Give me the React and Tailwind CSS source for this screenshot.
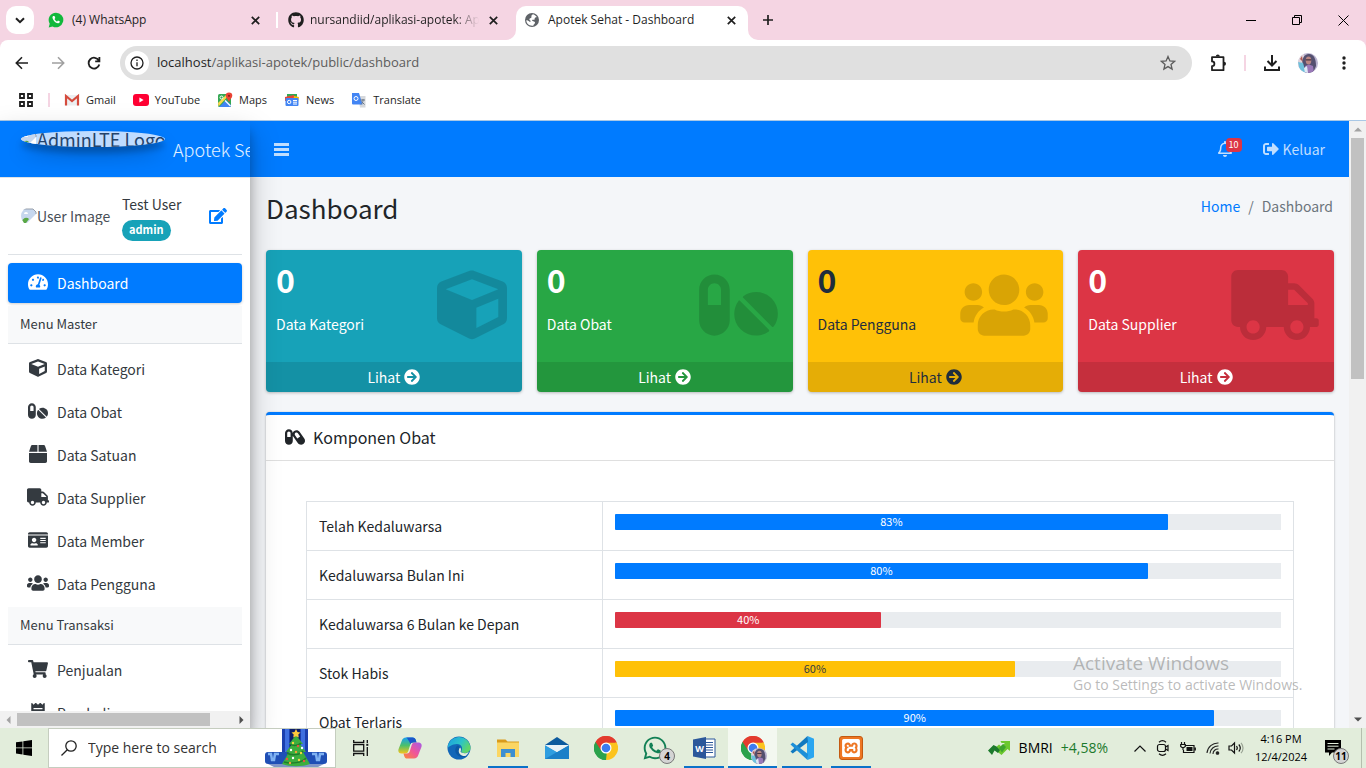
import React from "react";
import {
  FaTachometerAlt, FaCube, FaPills, FaBox, FaTruck, FaIdCard, FaUsers, FaShoppingCart, FaReceipt,
  FaCapsules, FaArrowCircleRight, FaSignOutAlt, FaRegBell, FaEdit, FaGithub, FaWhatsapp,
} from "react-icons/fa";
import { SiXampp } from "react-icons/si";

/* ---------- Browser icons ---------- */

const stroke = { fill: "none", stroke: "currentColor" };

function CloseX({ size = 9 }) {
  return (
    <svg width={size} height={size} viewBox="0 0 9 9" {...stroke} strokeWidth="1.7">
      <path d="M.8.8l7.4 7.4M8.2.8L.8 8.2" />
    </svg>
  );
}

function WhatsAppDot() {
  return (
    <svg className="h-4 w-4 shrink-0" viewBox="0 0 16 16">
      <path d="M8 .7a7.3 7.3 0 0 0-6.3 11L.7 15.4l3.8-1A7.3 7.3 0 1 0 8 .7z" fill="#12b83c" />
      <path d="M5.1 4c-.9.7-.9 2 .3 3.900 1.500 2.300 3.400 3.500 5 3.300.9-.1 1.500-.8 1.500-1.600L10 8.500l-.9 1C8 9 7 8 6.500 6.900l.8-.9L6.500 4z" fill="#fff" />
    </svg>
  );
}

function Globe() {
  return (
    <svg className="h-4 w-4 shrink-0" viewBox="0 0 16 16">
      <circle cx="8" cy="8" r="7" fill="#5f6368" />
      <path d="M8.800 2.300c1.500.3 3 1.200 4 2.700-.8.500-1.600.3-2 .9-.4.700.3 1.200-.3 1.700-.7.500-1.800-.1-2.300.5-.4.500.2 1.100 1 1.200 1 .1 1.800.500 1.800 1.400 0 1.300-1.600 1.500-1.700 3C5 14.300 2.300 11.600 2.300 8.300c1.100-.1 2.200.500 3 1.300.7.600 1.500.2 1.300-.6-.2-.9-1.300-.8-1.300-1.800 0-1.100 1.700-.9 2.100-1.800.4-.8-.4-1.200.1-1.900.3-.5.8-.6 1.300-1.200z" fill="#fff" />
    </svg>
  );
}

function GmailIcon() {
  return (
    <svg className="h-4 w-4" viewBox="0 0 16 16">
      <path d="M1 3h14v10.500H1z" fill="#eceff1" />
      <path d="M2 13.500V4l6 5 6-5v9.500" fill="none" stroke="#d54b3d" strokeWidth="2.200" />
    </svg>
  );
}

function YouTubeIcon() {
  return (
    <svg className="h-4 w-4" viewBox="0 0 16 16">
      <rect y="2" width="16" height="12" rx="3" fill="#ff0033" />
      <path d="M6.400 5.500v5L10.600 8z" fill="#fff" />
    </svg>
  );
}

function MapsIcon() {
  return (
    <svg className="h-4 w-4" viewBox="0 0 16 16">
      <rect x="1" y="2" width="13" height="13" rx="1.500" fill="#34a853" />
      <path d="M2 15L9 8l5 5v.500a1.500 1.500 0 0 1-1.500 1.500z" fill="#4285f4" />
      <path d="M1 11l9-9h3L1.500 14.500z" fill="#fbd74a" />
      <path d="M8 8.500l5.500 5.500" stroke="#fff" strokeWidth="1.200" />
      <circle cx="4.500" cy="5.500" r="1.500" fill="none" stroke="#fff" />
      <path d="M12 .5a3.300 3.300 0 0 0-3.300 3.300C8.700 6 11 7 12 10c1-3 3.300-4 3.300-6.200A3.300 3.300 0 0 0 12 .5z" fill="#ea4335" />
      <circle cx="12" cy="3.800" r="1.100" fill="#8c231b" />
    </svg>
  );
}

function NewsIcon() {
  return (
    <svg className="h-4 w-4" viewBox="0 0 16 16">
      <rect x="3" y="2" width="10" height="7" fill="#34a853" />
      <path d="M1 5l9-2 1 6H1z" fill="#ea4335" />
      <path d="M10 4l5 1-1 5H9z" fill="#fbbc04" />
      <rect x="1.500" y="6" width="13" height="8" rx="1" fill="#4285f4" />
      <circle cx="5.200" cy="10" r="1.700" fill="none" stroke="#fff" />
      <path d="M9 8.500h4M9 10.200h4M9 12h4" stroke="#fff" />
    </svg>
  );
}

function TranslateIcon() {
  return (
    <svg className="h-4 w-4" viewBox="0 0 16 16">
      <path d="M7 4h7.500v11.500H9z" fill="#d5d8dc" />
      <path d="M1 1h7l3.500 11.500H2a1 1 0 0 1-1-1z" fill="#4285f4" />
      <circle cx="5" cy="6.500" r="2" fill="none" stroke="#fff" />
      <path d="M9.500 8h4.500M12 7v1c0 2-1 3.500-2 4.500M10.500 9.500l3 3" stroke="#6b7785" fill="none" />
    </svg>
  );
}

function Avatar({ className }) {
  return (
    <svg className={className} viewBox="0 0 20 20">
      <defs>
        <clipPath id="face"><circle cx="10" cy="10" r="10" /></clipPath>
      </defs>
      <g clipPath="url(#face)">
        <path d="M0 0h20v20H0z" fill="#b9b3cf" />
        <path d="M0 0h6v20H0z" fill="#e0d3da" />
        <path d="M2 6l2-3 1 6z" fill="#b0574f" />
        <path d="M5 14C3 6 6 1 11 1s7 5 7 12l-3 7H7z" fill="#54506f" />
        <path d="M0 9l5 1 3 10H2z" fill="#6fc0dc" />
        <ellipse cx="10.500" cy="7.500" rx="2.800" ry="4" fill="#b98683" />
        <path d="M7.700 6.300h5.600v1.200H7.700z" fill="#4a3542" />
        <path d="M7 13l4-1.500 4 1.500 1 7H7z" fill="#9a79b8" />
        <path d="M6 15l3-2 1 7H7z" fill="#dfe9f5" />
      </g>
    </svg>
  );
}

function ChromeLogo({ className }) {
  return (
    <svg className={className} viewBox="0 0 24 24">
      <path d="M12 12L1.600 6A12 12 0 0 1 22.400 6z" fill="#e33b2e" />
      <path d="M12 12L22.400 6A12 12 0 0 1 12 24z" fill="#fcc31e" />
      <path d="M12 12v12A12 12 0 0 1 1.600 6z" fill="#2ba24c" />
      <path d="M12 6.500h10.700L17 15l-5 9 1-9z" fill="#fcc31e" />
      <path d="M1.600 6l5.600 9 5.500 2.500L12 24A12 12 0 0 1 1.600 6z" fill="#2ba24c" />
      <path d="M12 6.500h10.700A12 12 0 0 0 1.600 6l5.600 8.500z" fill="#e33b2e" />
      <circle cx="12" cy="12" r="5.500" fill="#fff" />
      <circle cx="12" cy="12" r="4.300" fill="#3c7cf0" />
    </svg>
  );
}

/* ---------- Browser chrome ---------- */

function TabStrip() {
  return (
    <header className="flex h-10 shrink-0 items-stretch bg-[#f5d5e3] text-xs text-[#1f1f1f]">
      <button aria-label="Search tabs" className="ml-1.5 mt-1.5 flex size-7 items-center justify-center rounded-[10px] bg-white">
        <svg width="10" height="7" viewBox="0 0 10 7" {...stroke} strokeWidth="2"><path d="M1 1.200l4 4 4-4" /></svg>
      </button>
      <div className="ml-3.5 flex w-[228px] items-center">
        <WhatsAppDot />
        <span className="ml-2 flex-1">(4) WhatsApp</span>
        <button aria-label="Close tab" className="mr-4"><CloseX /></button>
      </div>
      <div className="flex w-[240px] items-center">
        <span className="mr-2.5 h-4 w-0.5 bg-white" />
        <FaGithub className="size-4 shrink-0" />
        <span className="ml-1.5 flex-1 overflow-hidden whitespace-nowrap [mask-image:linear-gradient(to_right,black_85%,transparent)]">nursandiid/aplikasi-apotek: Aplikasi</span>
        <button aria-label="Close tab" className="ml-2.5 mr-[18px]"><CloseX /></button>
      </div>
      <div className="mt-1.5 flex items-end">
        <svg width="10" height="10" className="-ml-2.5" viewBox="0 0 10 10"><path d="M10 0v10H0A10 10 0 0 0 10 0z" fill="#fff" /></svg>
        <div className="flex h-full w-[232px] items-center rounded-t-[10px] bg-white pb-1.5 pl-2">
          <Globe />
          <span className="ml-2 flex-1">Apotek Sehat - Dashboard</span>
          <button aria-label="Close tab" className="mr-3"><CloseX /></button>
        </div>
        <svg width="10" height="10" viewBox="0 0 10 10"><path d="M0 0v10h10A10 10 0 0 1 0 0z" fill="#fff" /></svg>
      </div>
      <button aria-label="New tab" className="px-1">
        <svg width="12" height="12" viewBox="0 0 12 12" {...stroke} strokeWidth="1.700"><path d="M6 1v10M1 6h10" /></svg>
      </button>
      <div className="ml-auto flex text-black">
        <button aria-label="Minimize" className="flex w-[46px] items-center justify-center">
          <svg width="10" height="10" viewBox="0 0 10 10" {...stroke}><path d="M0 5.500h10" /></svg>
        </button>
        <button aria-label="Restore" className="flex w-[46px] items-center justify-center">
          <svg width="10" height="10" viewBox="0 0 10 10" {...stroke}><path d="M.5 2.500h7v7h-7zM2.500 2.500v-2h7v7h-2" /></svg>
        </button>
        <button aria-label="Close" className="flex w-[46px] items-center justify-center">
          <svg width="11" height="11" viewBox="0 0 11 11" {...stroke}><path d="M.5.5l10 10M10.500.5l-10 10" /></svg>
        </button>
      </div>
    </header>
  );
}

function Toolbar() {
  return (
    <div className="bg-[#f5d5e3]">
      <div className="flex h-[46px] items-center rounded-t-lg bg-white pl-1 text-[#1f1f1f]">
        <button aria-label="Back" className="flex w-9 justify-center">
          <svg width="14" height="14" viewBox="0 0 14 14" {...stroke} strokeWidth="1.600"><path d="M13 7H1.500M7 1.300L1.300 7 7 12.700" /></svg>
        </button>
        <button aria-label="Forward" className="flex w-9 justify-center text-[#a0a0a0]">
          <svg width="14" height="14" viewBox="0 0 14 14" {...stroke} strokeWidth="1.600"><path d="M1 7h11.500M7 1.300L12.700 7 7 12.700" /></svg>
        </button>
        <button aria-label="Reload" className="flex w-9 justify-center">
          <svg width="14" height="14" viewBox="0 0 14 14" {...stroke} strokeWidth="1.800"><path d="M11.800 4.500A5.400 5.400 0 1 0 12.300 8.500M12.400 1v4.300H8.200" /></svg>
        </button>
        <div className="ml-2 flex h-[34px] flex-1 items-center rounded-full bg-[#e0e0e0] pl-[5px]">
          <button aria-label="Site information" className="flex size-6 items-center justify-center rounded-full bg-white">
            <svg width="14" height="14" viewBox="0 0 14 14" {...stroke} strokeWidth="1.300"><circle cx="7" cy="7" r="6" /><path d="M7 6.300v4M7 3.600v1.500" /></svg>
          </button>
          <span className="ml-2 flex-1 text-[13px] text-[#5c5c5c]"><span className="text-[#1f1f1f]">localhost</span>/aplikasi-apotek/public/dashboard</span>
          <button aria-label="Bookmark" className="mr-4 text-[#5c5c5c]">
            <svg width="16" height="16" viewBox="0 0 16 16" {...stroke} strokeWidth="1.300"><path d="M8 1.500l1.900 4.400 4.700.4-3.600 3.100 1.100 4.700L8 11.600l-4.100 2.500L5 9.400 1.400 6.300l4.700-.4z" /></svg>
          </button>
        </div>
        <button aria-label="Extensions" className="ml-[18px]">
          <svg width="18" height="18" viewBox="0 0 18 18" {...stroke} strokeWidth="1.800"><path d="M2 3.200h11.500v13H2v-4a2.300 2.300 0 0 0 0-4.800z" strokeLinejoin="round" /><path d="M5.800 2.600a2 2 0 0 1 4 0zM14 7.700a2 2 0 0 1 0 4z" fill="currentColor" stroke="none" /></svg>
        </button>
        <span className="ml-4 h-4 w-0.5 bg-[#f5d5e3]" />
        <button aria-label="Downloads" className="ml-[18px]">
          <svg width="16" height="16" viewBox="0 0 16 16" {...stroke} strokeWidth="2"><path d="M8 0v10M3.500 6L8 10.500 12.500 6M1 11.500V15h14v-3.500" /></svg>
        </button>
        <button aria-label="Profile" className="ml-[18px]"><Avatar className="size-5" /></button>
        <button aria-label="Menu" className="ml-6 mr-5">
          <svg width="4" height="14" viewBox="0 0 4 14" fill="currentColor"><circle cx="2" cy="2" r="1.700" /><circle cx="2" cy="7" r="1.700" /><circle cx="2" cy="12" r="1.700" /></svg>
        </button>
      </div>
    </div>
  );
}

const bookmarks = [
  ["Gmail", GmailIcon], ["YouTube", YouTubeIcon], ["Maps", MapsIcon], ["News", NewsIcon], ["Translate", TranslateIcon],
];

function Bookmarks() {
  return (
    <nav className="flex h-[34px] shrink-0 items-center bg-white pb-1.5 pl-[19px] text-[11px] text-[#1f1f1f]">
      <svg width="14" height="14" viewBox="0 0 14 14" {...stroke} strokeWidth="1.800"><path d="M1 1h4v4H1zM9 1h4v4H9zM1 9h4v4H1zM9 9h4v4H9z" /></svg>
      <span className="ml-[15px] mr-3.5 h-3.5 w-0.5 bg-[#f5d5e3]" />
      <div className="flex gap-[17px]">
        {bookmarks.map(([name, Icon]) => (
          <a key={name} href="#" className="flex items-center gap-1.5"><Icon />{name}</a>
        ))}
      </div>
    </nav>
  );
}

/* ---------- Sidebar ---------- */

function BrokenImage() {
  return (
    <svg className="h-4 w-4 shrink-0" viewBox="0 0 16 16">
      <path d="M0 1h12l3 3v11H0z" fill="#c6d7ee" />
      <path d="M0 15c2-6 6-6 8-4l-3 4z" fill="#5aa845" />
      <path d="M3 6a2 2 0 0 1 4 0z" fill="#fff" />
      <path d="M15 6L6 15h9z" fill="#fff" />
      <path d="M0 1h12l3 3v2" fill="none" stroke="#98a0ab" />
    </svg>
  );
}

function NavItem({ icon: Icon, size = "w-5", label, active }) {
  return (
    <li>
      <a href="#" className={"mb-[3px] flex h-10 items-center px-4 " + (active
        ? "rounded bg-[#007bff] text-white shadow-[0_1px_3px_rgba(0,0,0,.2)]"
        : "text-[#343a40]")}>
        <span className="flex w-7 justify-center pb-0.5"><Icon className={"h-[18px] " + size} /></span>
        <span className="ml-[5px]">{label}</span>
      </a>
    </li>
  );
}

function NavHeader({ children }) {
  return <li className="mb-[5px] h-[38px] border-b border-[#dee2e6] bg-[#f8f9fa] px-3 text-[13px] leading-9 text-[#343a40]">{children}</li>;
}

function Sidebar() {
  return (
    <aside className="relative z-10 flex w-[250px] shrink-0 flex-col overflow-hidden bg-white shadow-[0_14px_28px_rgba(0,0,0,.25),0_10px_10px_rgba(0,0,0,.22)]">
      <a href="#" className="flex h-[57px] shrink-0 items-start overflow-hidden border-b border-[#dee2e6] bg-[#007bff] pl-[21px] pt-2.5 text-lg">
        <span className="flex h-4 w-36 shrink-0 items-center overflow-hidden whitespace-nowrap rounded-[50%] bg-[#bfdcff] leading-4 text-[#23436b] shadow-[0_10px_20px_rgba(0,0,0,.19),0_6px_6px_rgba(0,0,0,.23)]">
          <BrokenImage />AdminLTE Logo
        </span>
        <span className="ml-2 whitespace-nowrap pt-1 font-light text-white/90">Apotek Sehat</span>
      </a>
      <div className="min-h-0 flex-1 overflow-hidden px-2">
        <div className="flex h-[77px] items-center border-b border-[#dee2e6] pl-[13px]">
          <span className="flex h-[18px] w-[92px] items-center overflow-hidden whitespace-nowrap rounded-full text-[#495057]">
            <BrokenImage />User Image
          </span>
          <div className="ml-[9px] flex flex-col items-start gap-1">
            <a href="#" className="leading-6 text-[#343a40]">Test User</a>
            <span className="h-[21px] rounded-full bg-[#17a2b8] px-[7px] text-[11px] font-bold leading-[19px] text-white">admin</span>
          </div>
          <a href="#" aria-label="Edit profile" className="ml-auto mr-[15px] text-[#007bff]"><FaEdit className="h-4 w-[18px]" /></a>
        </div>
        <ul className="pt-2">
          <NavItem icon={FaTachometerAlt} label="Dashboard" active />
          <NavHeader>Menu Master</NavHeader>
          <NavItem icon={FaCube} label="Data Kategori" />
          <NavItem icon={FaPills} label="Data Obat" />
          <NavItem icon={FaBox} label="Data Satuan" />
          <NavItem icon={FaTruck} size="w-[22px]" label="Data Supplier" />
          <NavItem icon={FaIdCard} label="Data Member" />
          <NavItem icon={FaUsers} size="w-[22px]" label="Data Pengguna" />
          <NavHeader>Menu Transaksi</NavHeader>
          <NavItem icon={FaShoppingCart} label="Penjualan" />
          <NavItem icon={FaReceipt} label="Pembelian" />
        </ul>
      </div>
      <div className="flex h-[17px] shrink-0 items-center bg-[#f1f1f1] px-1.5">
        <svg width="5" height="8" viewBox="0 0 5 8"><path d="M4.500 0v8L.5 4z" fill="#a3a3a3" /></svg>
        <span className="ml-1.5 h-[13px] w-[193px] bg-[#c1c1c1]" />
        <svg className="ml-auto" width="5" height="8" viewBox="0 0 5 8"><path d="M.5 0v8l4-4z" fill="#505050" /></svg>
      </div>
    </aside>
  );
}

/* ---------- Dashboard ---------- */

const boxes = [
  { label: "Data Kategori", icon: FaCube, size: "w-[70px]", color: "bg-[#17a2b8] text-white" },
  { label: "Data Obat", icon: FaPills, size: "w-[79px]", color: "bg-[#28a745] text-white" },
  { label: "Data Pengguna", icon: FaUsers, size: "w-[88px]", color: "bg-[#ffc107] text-[#1f2d3d]" },
  { label: "Data Supplier", icon: FaTruck, size: "w-[88px]", color: "bg-[#dc3545] text-white" },
];

function SmallBox({ label, icon: Icon, size, color }) {
  return (
    <section className={"flex h-[142px] flex-col justify-between overflow-hidden rounded shadow-[0_1px_3px_rgba(0,0,0,.25)] " + color}>
      <div className="flex items-start justify-between pl-2.5 pr-[15px] pt-2.5">
        <div>
          <h3 className="text-[32px] font-bold leading-[38px]">0</h3>
          <p className="mt-3.5 leading-6">{label}</p>
        </div>
        <Icon className={"mt-2.5 h-[70px] shrink-0 text-black/15 " + size} />
      </div>
      <a href="#" className="flex h-[30px] items-center justify-center gap-1 bg-black/10">
        Lihat <FaArrowCircleRight className="size-4" />
      </a>
    </section>
  );
}

const rows = [
  ["Telah Kedaluwarsa", 83, "bg-[#007bff] text-white"],
  ["Kedaluwarsa Bulan Ini", 80, "bg-[#007bff] text-white"],
  ["Kedaluwarsa 6 Bulan ke Depan", 40, "bg-[#dc3545] text-white"],
  ["Stok Habis", 60, "bg-[#ffc107] text-[#343a40]"],
  ["Obat Terlaris", 90, "bg-[#007bff] text-white"],
];

function Main() {
  return (
    <div className="flex min-w-0 flex-1 flex-col overflow-hidden bg-[#f4f6f9]">
      <nav className="flex h-14 shrink-0 items-center bg-[#007bff] pl-6 pr-6 text-white/75">
        <button aria-label="Toggle sidebar">
          <svg width="15" height="13" viewBox="0 0 15 13" fill="currentColor"><path d="M0 0h15v3H0zM0 5h15v3H0zM0 10h15v3H0z" /></svg>
        </button>
        <a href="#" className="relative ml-auto mr-[30px]" aria-label="Notifications">
          <FaRegBell className="size-4" />
          <span className="absolute -top-[3px] left-[9px] rounded bg-[#dc3545] px-[3px] text-[9px] leading-[14px] text-white">10</span>
        </a>
        <a href="#" className="flex items-center gap-1"><FaSignOutAlt className="size-4" />Keluar</a>
      </nav>
      <div className="flex h-[73px] shrink-0 items-start justify-between pl-4 pr-4 pt-4">
        <h1 className="text-[26px] leading-[30px] text-[#212529]">Dashboard</h1>
        <ol className="flex leading-[26px] text-[#6c757d]">
          <li><a href="#" className="text-[#007bff]">Home</a></li>
          <li className="px-2">/</li>
          <li>Dashboard</li>
        </ol>
      </div>
      <div className="grid shrink-0 grid-cols-4 gap-[15px] pl-4 pr-[15px]">
        {boxes.map((b) => <SmallBox key={b.label} {...b} />)}
      </div>
      <section className="ml-4 mr-[15px] mt-5 shrink-0 rounded border-t-[3px] border-[#007bff] bg-white shadow-[0_0_1px_rgba(0,0,0,.3),0_1px_3px_rgba(0,0,0,.2)]">
        <h2 className="flex h-[46px] items-center gap-2 border-b border-[#dfdfdf] pb-0.5 pl-[19px] text-base text-[#212529]">
          <FaCapsules className="h-[18px] w-5" />Komponen Obat
        </h2>
        <div className="p-10">
          <table className="w-full table-fixed border-collapse text-[#212529]">
            <tbody>
              {rows.map(([name, pct, color]) => (
                <tr key={name} className="h-[49px]">
                  <th scope="row" className="w-[30%] border border-[#dee2e6] px-3 text-left font-normal">{name}</th>
                  <td className="border border-[#dee2e6] px-3 pb-2">
                    <div className="h-4 bg-[#e9ecef]">
                      <div className={"h-4 rounded-[1px] text-center text-[11px] leading-[14px] " + color} style={{ width: pct + "%" }}>{pct}%</div>
                    </div>
                  </td>
                </tr>
              ))}
            </tbody>
          </table>
        </div>
      </section>
    </div>
  );
}

function PageScrollbar() {
  return (
    <div className="flex w-[17px] shrink-0 flex-col items-center bg-[#f1f1f1] py-1.5">
      <svg width="8" height="5" viewBox="0 0 8 5"><path d="M0 4.500h8L4 .5z" fill="#a3a3a3" /></svg>
      <span className="mt-1.5 h-[241px] w-[13px] bg-[#c1c1c1]" />
      <svg className="mt-auto" width="8" height="5" viewBox="0 0 8 5"><path d="M0 .5h8l-4 4z" fill="#505050" /></svg>
    </div>
  );
}

/* ---------- Taskbar ---------- */

function Tree() {
  return (
    <svg className="h-[38px] w-[62px]" viewBox="0 0 62 38">
      <path d="M17 0h26v38H17z" fill="#1c3fae" />
      <path d="M20 0h4v38h-4zM36 0h4v38h-4z" fill="#3f6fe0" />
      <path d="M25 0h10v20H25z" fill="#0c1f6b" />
      <rect y="23" width="62" height="12" rx="3" fill="#1f4fb5" />
      <path d="M3 25h3l1 6h2l1-6h4M47 25h4l1 6h2l1-6h4" stroke="#7fb2f2" strokeWidth="2.500" fill="none" />
      <path d="M3 35h56l-6 3H9z" fill="#7f96c8" />
      <path d="M31 6l7 9h-3l6 8h-3l7 12c-8 3-20 3-28 0l7-12h-3l6-8h-3z" fill="#3cae3e" />
      <path d="M25 15c3 2 8 2 11-1M22 24c5 3 13 2 16-2M19 33c7 2 18 1 22-4" stroke="#1f7d2b" strokeWidth="1.500" fill="none" />
      <path d="M31 0l1.500 3 3 .4-2.200 2.200.5 3L31 7.200l-2.800 1.400.5-3-2.200-2.200 3-.4z" fill="#ffc93c" />
      {[[28, 14, "#f5d442"], [33, 17, "#e8543f"], [26, 21, "#fff"], [31, 23, "#f4a13a"], [36, 24, "#f5d442"], [22, 30, "#e8543f"], [28, 29, "#fff"], [34, 31, "#f5d442"], [39, 32, "#e8543f"], [25, 34, "#f4a13a"], [37, 19, "#fff"]].map(([x, y, c]) => (
        <circle key={x + "-" + y} cx={x} cy={y} r="1.200" fill={c} />
      ))}
    </svg>
  );
}

function CopilotIcon() {
  return (
    <svg className="h-6 w-6" viewBox="0 0 24 24">
      <defs>
        <linearGradient id="cpA" x1="0" y1="0" x2="0" y2="1"><stop offset="0" stopColor="#18a0f0" /><stop offset=".5" stopColor="#4cc06a" /><stop offset="1" stopColor="#f7c41c" /></linearGradient>
        <linearGradient id="cpB" x1="1" y1="0" x2="0" y2="1"><stop offset="0" stopColor="#a55be8" /><stop offset=".5" stopColor="#f0559a" /><stop offset="1" stopColor="#fb8a34" /></linearGradient>
      </defs>
      <path d="M8 1.500h6.500c2 0 2.800 1 3.300 2.600l.7 2.400H15c-1.500 0-2.300.8-2.700 2l-2 6.500c-.5 1.700-1.500 2.500-3.300 2.500H3.500c-2.600 0-3.600-2-3-4.300L3.700 5c.7-2.300 2-3.500 4.300-3.500z" fill="url(#cpA)" />
      <path d="M8 1.500h6.500c2 0 2.800 1 3.300 2.600l.7 2.400H15c-1.500 0-2.300.8-2.700 2L11.500 6 9 2z" fill="#1b56c9" />
      <path d="M16 22.500H9.500c-2 0-2.800-1-3.300-2.600l-.7-2.400H9c1.500 0 2.300-.8 2.700-2l2-6.500c.5-1.700 1.500-2.500 3.300-2.500h3.500c2.600 0 3.600 2 3 4.300L20.300 19c-.7 2.300-2 3.500-4.300 3.500z" fill="url(#cpB)" />
    </svg>
  );
}

function EdgeIcon() {
  return (
    <svg className="h-6 w-6" viewBox="0 0 24 24">
      <defs>
        <linearGradient id="edA" x1="0" y1="0" x2="1" y2=".5"><stop offset="0" stopColor="#1b9de2" /><stop offset=".6" stopColor="#2cc3c8" /><stop offset="1" stopColor="#5fd668" /></linearGradient>
      </defs>
      <circle cx="12" cy="12" r="11.500" fill="#1267b8" />
      <path d="M.6 12A11.500 11.500 0 0 1 23.500 11c.3 4-2.700 6-6 6-3 0-3.500-1.500-3-2.300 1.600-2.200.2-6.700-4.500-6.700-5 0-8.500 3-9.400 4z" fill="url(#edA)" />
      <path d="M10.500 9.500c-2.500 2-3 5.500-1 8.500 2 2.700 6 4 10 2-4.500.3-8-2.500-7.500-6 .1-1 .6-1.600 1-2 .2-1-1-2.500-2.500-2.500z" fill="#0c59a4" />
      <path d="M13 11.500c1.500 1.500 1 3 .5 4 .8 1.500 4.500 2.700 8.300.5-1 2-2.500 3.500-3.500 4-4 .5-7-2.500-6.500-5.500.1-1.300.6-2.300 1.200-3z" fill="#e2eddb" />
    </svg>
  );
}

function ExplorerIcon() {
  return (
    <svg className="h-6 w-6" viewBox="0 0 24 24">
      <path d="M1 3.500h8.500l2 2H23v4H1z" fill="#d99b1c" />
      <path d="M1 6.500h22V21H1z" fill="#fbd663" />
      <path d="M5 21v-8h14v8h-4.500v-4h-5v4z" fill="#3d8fd1" />
    </svg>
  );
}

function MailIcon() {
  return (
    <svg className="h-6 w-6" viewBox="0 0 24 24">
      <path d="M0 9l12-8 12 8z" fill="#0c5a9e" />
      <path d="M0 9v14h24V9l-12 7z" fill="#2f9ee0" />
      <path d="M0 23L24 9v14z" fill="#1b80c8" />
      <path d="M0 9l12 7 12-7z" fill="#e9f2f7" />
    </svg>
  );
}

function WordIcon() {
  return (
    <svg className="h-6 w-6" viewBox="0 0 24 24">
      <path d="M12 3h11v18H12z" fill="#fff" stroke="#2b579a" />
      <path d="M14 6.500h7M14 9h7M14 11.500h7M14 14h7M14 16.500h7" stroke="#2b579a" />
      <path d="M1 3.500L14 1v22L1 20.500z" fill="#2b579a" />
      <text x="7.500" y="15.500" fontSize="9" fontWeight="700" fill="#fff" textAnchor="middle">W</text>
    </svg>
  );
}

function VSCodeIcon() {
  return (
    <svg className="h-6 w-6" viewBox="0 0 24 24">
      <path d="M17.500 0L24 2.800v18.400L17.500 24l-.5-6V6z" fill="#2aa6f0" />
      <path d="M17.500 0L.5 15.500l2.200 2L18 6z" fill="#1179bf" />
      <path d="M17.500 24L.5 8.500l2.200-2L18 18z" fill="#1c8fd8" />
    </svg>
  );
}

function Badge({ children }) {
  return <span className="absolute bottom-1 right-1 flex size-4 items-center justify-center rounded-full border border-[#777] bg-[#d4d4d4] text-[10px] font-bold text-black">{children}</span>;
}

const apps = [
  { name: "Task view", line: "", icon: (
    <svg className="h-4 w-4" viewBox="0 0 16 16" fill="none" stroke="#111" strokeWidth="1.300"><path d="M.7 0v2.500h10V0M.7 16v-2.500h10V16M.7 4.700h10v6.500H.7zM14.300 0v3M14.300 7v9" /><path d="M13.300 3.800h2v2h-2z" fill="#111" stroke="none" /></svg>
  ) },
  { name: "Copilot", line: "", icon: <CopilotIcon /> },
  { name: "Edge", line: "", icon: <EdgeIcon /> },
  { name: "File Explorer", line: "w-10", icon: <ExplorerIcon /> },
  { name: "Mail", line: "", icon: <MailIcon /> },
  { name: "Chrome", line: "", icon: <ChromeLogo className="size-6" /> },
  { name: "WhatsApp", line: "", icon: <><FaWhatsapp className="size-[26px] text-[#128055]" /><Badge>4</Badge></> },
  { name: "Word", line: "w-10", icon: <WordIcon /> },
  { name: "Chrome profile", line: "w-full", active: true, icon: <><ChromeLogo className="size-6" /><Avatar className="absolute bottom-1 right-2.5 size-4" /></> },
  { name: "Visual Studio Code", line: "w-10", icon: <VSCodeIcon /> },
  { name: "XAMPP", line: "w-10", icon: <span className="flex size-6 items-center justify-center rounded-[3px] border border-[#c35a12] bg-[#ee7623]"><SiXampp className="size-[18px] text-white" /></span> },
];

function Taskbar() {
  return (
    <footer className="relative z-20 flex h-10 shrink-0 bg-[#e2eddb] text-black">
      <button aria-label="Start" className="flex w-12 items-center justify-center">
        <svg width="16" height="16" viewBox="0 0 16 16"><path d="M0 2.300l6.500-.9v6.100H0zM7.300 1.300L16 0v7.500H7.300zM0 8.300h6.500v6.200L0 13.600zM7.300 8.300H16V16l-8.700-1.300z" /></svg>
      </button>
      <label className="flex w-72 items-center border border-[#c5cdbf] bg-white pl-3">
        <svg className="shrink-0" width="16" height="16" viewBox="0 0 16 16" fill="none" stroke="#222" strokeWidth="1.300"><circle cx="10" cy="6" r="5.200" /><path d="M6.300 9.700L.5 15.500" /></svg>
        <input aria-label="Search" placeholder="Type here to search" className="ml-[11px] w-0 flex-1 text-sm outline-none placeholder:text-[#333]" />
        <span className="mr-2"><Tree /></span>
      </label>
      {apps.map((a) => (
        <button key={a.name} aria-label={a.name} className={"relative flex w-[49px] items-center justify-center" + (a.active ? " bg-[#f3f8f0]" : "")}>
          {a.icon}
          {a.line && <span className={"absolute bottom-0 h-0.5 bg-[#0b72c9] " + a.line} />}
        </button>
      ))}
      <div className="ml-auto flex items-center">
        <svg width="22" height="14" viewBox="0 0 22 14"><path d="M6 8l5-4.500 2 1.700L17 2h-3.500L12.500 0H22v10l-2.500-2-6 6z" fill="#6cc82e" /><path d="M0 9.500L5.500 4l3 1.500L12 9l-2 3-3.500-2.500L4 14z" fill="#1c7a2c" /><path d="M11 7l4-4 3 3-4 5.500z" fill="#3da32d" /></svg>
        <span className="ml-[9px] text-sm">BMRI</span>
        <span className="ml-2 text-sm text-[#1c7a2c]">+4,58%</span>
        <svg className="ml-[26px]" width="12" height="7" viewBox="0 0 12 7" fill="none" stroke="#111" strokeWidth="1.200"><path d="M.5 6.500L6 1l5.500 5.500" /></svg>
        <svg className="ml-2.5" width="14" height="16" viewBox="0 0 14 16" fill="none" stroke="#111" strokeWidth="1.200"><rect x="1.500" y="4.500" width="8" height="7" rx="2" /><path d="M9.500 7l2.500-1.500v5L9.500 9M3 2.200C5 .5 8 .5 10 2.200M3 13.800c2 1.700 5 1.700 7 0" /></svg>
        <svg className="ml-2.5" width="16" height="14" viewBox="0 0 16 14" fill="none" stroke="#111" strokeWidth="1.200"><path d="M5 4.500h9v7H3.500V9M15.300 6.500v3" /><path d="M6.500 6h6v4h-6z" fill="#111" stroke="none" /><path d="M1.500 1v2M4.500 1v2M.7 3.500h4.600v2L4 6.500H2L.7 5.500zM3 6.500V9" /></svg>
        <svg className="ml-2.5" width="14" height="14" viewBox="0 0 14 14" fill="none" stroke="#222" strokeWidth="1.100"><path d="M1 12A11 11 0 0 1 12.500 2M4 12.500A8 8 0 0 1 12.500 5M7 13a5 5 0 0 1 5.500-5" /><circle cx="11.500" cy="12" r="1.300" fill="#222" /></svg>
        <svg className="ml-2" width="17" height="14" viewBox="0 0 17 14" fill="none" stroke="#111" strokeWidth="1.200"><path d="M1 5h2.500L6.500 2v10l-3-3H1z" /><path d="M8.500 5c.8 1 .8 3 0 4M10.800 3.500c1.700 2 1.700 5 0 7" /><path d="M13 1.800c2.700 3 2.700 7.400 0 10.400" stroke="#9aa394" /></svg>
        <div className="ml-1.5 w-[60px] text-center text-[11px] leading-[18px]"><div>4:16 PM</div><div>12/4/2024</div></div>
        <span className="relative ml-2 flex h-10 w-[34px] items-center pl-1.5">
          <svg width="16" height="16" viewBox="0 0 16 16"><path d="M0 0h16v12.500H7L4 16v-3.500H0z" /><path d="M2.500 3.500h11M2.500 6.200h11M2.500 9h7" stroke="#e2eddb" /></svg>
          <Badge>11</Badge>
        </span>
        <span className="ml-2 mr-1 h-10 w-px bg-[#b5bfae]" />
      </div>
    </footer>
  );
}

export default function App() {
  return (
    <div className="relative flex h-screen flex-col overflow-hidden font-['Open_Sans','Noto_Sans',sans-serif]">
      <TabStrip />
      <Toolbar />
      <Bookmarks />
      <div className="flex min-h-0 flex-1 border-t border-[#a9c8e6] font-['Noto_Sans_CJK_SC',sans-serif] text-sm">
        <Sidebar />
        <Main />
        <PageScrollbar />
      </div>
      <Taskbar />
      <div className="pointer-events-none absolute bottom-[73px] right-[57px] z-20 w-[236px] text-[#8c8c8c]/60">
        <p className="text-[19px] leading-6">Activate Windows</p>
        <p className="whitespace-nowrap text-sm leading-5">Go to Settings to activate Windows.</p>
      </div>
    </div>
  );
}
